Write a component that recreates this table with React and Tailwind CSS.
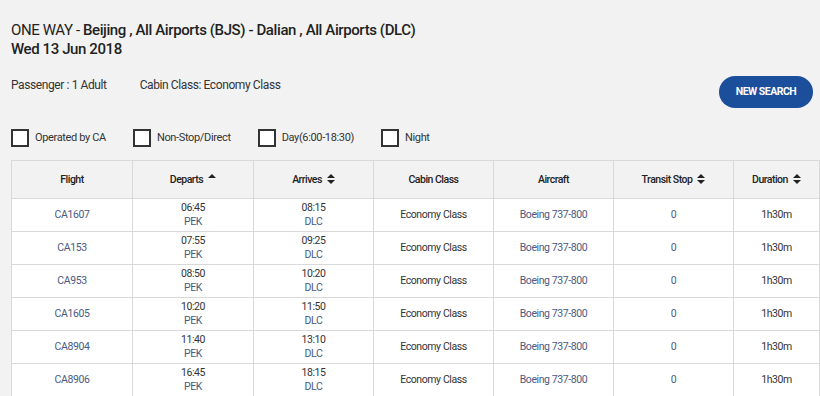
import React from 'react';

const flights = [
  { no: 'CA1607', dep: '06:45', arr: '08:15' },
  { no: 'CA153', dep: '07:55', arr: '09:25' },
  { no: 'CA953', dep: '08:50', arr: '10:20' },
  { no: 'CA1605', dep: '10:20', arr: '11:50' },
  { no: 'CA8904', dep: '11:40', arr: '13:10' },
  { no: 'CA8906', dep: '16:45', arr: '18:15' },
];

const filters = ['Operated by CA', 'Non-Stop/Direct', 'Day(6:00-18:30)', 'Night'];

function SortIcon({ up = true, down = true }) {
  return (
    <svg width="8" height="10" viewBox="0 0 8 10" className="inline-block ml-[5px] -mt-[2px]">
      {up && <path d="M0 4 L4 0 L8 4 Z" fill="#222" />}
      {down && <path d="M0 6 L8 6 L4 10 Z" fill="#222" />}
    </svg>
  );
}

export default function App() {
  const th = 'border border-[#d9d9d9] h-[38px] text-[10.5px] tracking-[-0.5px] font-medium text-[#222] text-center align-middle';
  const td = 'border border-[#d9d9d9] h-[33px] text-[10.5px] tracking-[-0.4px] text-center align-middle bg-white';

  return (
    <div className="w-[820px] h-[396px] overflow-hidden bg-[#f2f2f2] pl-[11px] text-[#333] font-['Roboto',sans-serif]">
      <div className="flex justify-between">
        <div className="pt-[21px]">
          <div className="text-[15px] leading-[19px] tracking-[-0.4px] text-[#222]">
            ONE WAY - <span className="font-medium">Beijing , All Airports (BJS) - Dalian , All Airports (DLC)</span>
          </div>
          <div className="text-[15px] leading-[19px] tracking-[-0.4px] font-medium text-[#222]">Wed 13 Jun 2018</div>
          <div className="mt-[18px] flex text-[12px] leading-[16px] tracking-[-0.4px]">
            <span>Passenger : 1 Adult</span>
            <span className="ml-[33px]">Cabin Class: Economy Class</span>
          </div>
        </div>
        <div className="pt-[76px] pr-[7px]">
          <button className="w-[94px] h-[32px] rounded-full bg-[#1b4f9c] text-white text-[10.5px] font-bold tracking-[-0.5px]">
            NEW SEARCH
          </button>
        </div>
      </div>

      <div className="mt-[21px] flex items-center gap-[27px]">
        {filters.map((f) => (
          <label key={f} className="flex items-center gap-[6px] text-[11px] tracking-[-0.35px]">
            <span className="w-[18px] h-[18px] border-2 border-[#333] bg-white" />
            <span>{f}</span>
          </label>
        ))}
      </div>

      <table className="mt-[13px] w-[808px] table-fixed border-collapse">
        <colgroup>
          <col className="w-[121px]" />
          <col className="w-[121px]" />
          <col className="w-[120px]" />
          <col className="w-[120px]" />
          <col className="w-[120px]" />
          <col className="w-[120px]" />
          <col className="w-[86px]" />
        </colgroup>
        <thead>
          <tr className="bg-[#f2f2f2]">
            <th className={th}>Flight</th>
            <th className={th}>Departs<SortIcon down={false} /></th>
            <th className={th}>Arrives<SortIcon /></th>
            <th className={th}>Cabin Class</th>
            <th className={th}>Aircraft</th>
            <th className={th}>Transit Stop<SortIcon /></th>
            <th className={th}>Duration<SortIcon /></th>
          </tr>
        </thead>
        <tbody>
          {flights.map((f) => (
            <tr key={f.no}>
              <td className={`${td} text-[#4a5a82]`}>{f.no}</td>
              <td className={td}>
                <div className="leading-[14px]">{f.dep}</div>
                <div className="leading-[14px] text-[#4a5a82]">PEK</div>
              </td>
              <td className={td}>
                <div className="leading-[14px]">{f.arr}</div>
                <div className="leading-[14px] text-[#4a5a82]">DLC</div>
              </td>
              <td className={td}>Economy Class</td>
              <td className={`${td} text-[#4a5a82]`}>Boeing 737-800</td>
              <td className={`${td} text-[#4a5a82]`}>0</td>
              <td className={td}>1h30m</td>
            </tr>
          ))}
        </tbody>
      </table>
    </div>
  );
}
